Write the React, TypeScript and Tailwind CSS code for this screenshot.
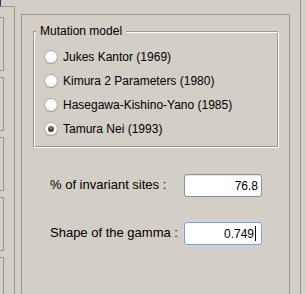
import React from "react";

const BG = "bg-[#d3cec6]";

function Radio({ checked }: { checked?: boolean }) {
  return (
    <div className="w-[12px] h-[12px] rounded-full bg-[radial-gradient(circle_at_50%_40%,#ffffff_45%,#e4e4e4_80%,#c9c9c9_100%)] shadow-[0_0_0_1px_rgba(120,120,120,0.35),0_1px_1px_rgba(0,0,0,0.15)] flex items-center justify-center">
      {checked && (
        <div className="w-[6px] h-[6px] rounded-full bg-[radial-gradient(circle_at_50%_30%,#8a8a8a_0%,#3a3a3a_60%,#1e1e1e_100%)]" />
      )}
    </div>
  );
}

export default function App() {
  const items = [
    { label: "Jukes Kantor (1969)" },
    { label: "Kimura 2 Parameters (1980)" },
    { label: "Hasegawa-Kishino-Yano (1985)" },
    { label: "Tamura Nei (1993)", checked: true },
  ];
  return (
    <div
      className={`w-[306px] h-[294px] ${BG} flex overflow-hidden text-black font-['Liberation_Sans',Arial,sans-serif]`}
    >
      {/* left column */}
      <div className="w-[15px] flex flex-col">
        <div className="h-[14px]">
          <div className="w-[1px] h-[6px] bg-[#2a3550]" />
        </div>
        <div className="flex-1 border-t border-r border-[#9c978f] pt-[10px] flex flex-col gap-[6px]">
          <div className="w-[4px] h-[54px] border-y border-r border-[#9c978f]" />
          <div className="w-[4px] h-[54px] border-y border-r border-[#9c978f]" />
          <div className="w-[4px] h-[54px] border-y border-r border-[#9c978f]" />
          <div className="w-[4px] h-[54px] border-y border-r border-[#9c978f]" />
          <div className="w-[4px] h-[54px] border-y border-r border-[#9c978f]" />
        </div>
      </div>
      <div className="w-[6px]" />
      {/* main panel */}
      <div className="w-[269px] mt-[14px] border-l border-t border-r border-[#9c978f] flex flex-col">
        <div className="ml-[11px] mt-[16px] w-[246px] relative border border-t-[#9c978f] border-l-[#9c978f] border-b-white border-r-white">
          <div className="border border-t-white border-l-white border-b-[#9c978f] border-r-[#9c978f] pt-[12px] pb-[5px] pl-[10px]">
            {items.map((it) => (
              <div key={it.label} className="h-[24px] flex items-center gap-[6px]">
                <Radio checked={it.checked} />
                <span className="text-[12px] leading-[14px]">{it.label}</span>
              </div>
            ))}
          </div>
          <span className={`absolute left-[2px] top-[-8px] px-[4px] ${BG} text-[12px] leading-[14px]`}>
            Mutation model
          </span>
        </div>
        <div className="mt-[26px] pl-[28px] flex items-center">
          <span className="w-[134px] text-[13px] leading-[15px] -mt-[3px]">% of invariant sites :</span>
          <div className="w-[78px] h-[23px] rounded-[3px] border border-[#8f8f8f] bg-white shadow-[inset_0_1px_1px_rgba(0,0,0,0.12)] flex items-center justify-end pr-[3px] text-[12px] leading-[14px]">
            76.8
          </div>
        </div>
        <div className="mt-[25px] pl-[28px] flex items-center">
          <span className="w-[134px] text-[13px] leading-[15px] -mt-[3px]">Shape of the gamma :</span>
          <div className="w-[78px] h-[23px] rounded-[3px] border border-[#7b9ed2] shadow-[0_0_0_1px_#c3d6f0] bg-white flex items-center justify-end pr-[5px] text-[12px] leading-[14px]">
            <span>0.749</span>
            <span className="ml-[1px] w-[1px] h-[15px] bg-black" />
          </div>
        </div>
      </div>
      <div className="w-[10px]" />
      <div className="w-[6px] border-l border-[#9c978f]" />
    </div>
  );
}
